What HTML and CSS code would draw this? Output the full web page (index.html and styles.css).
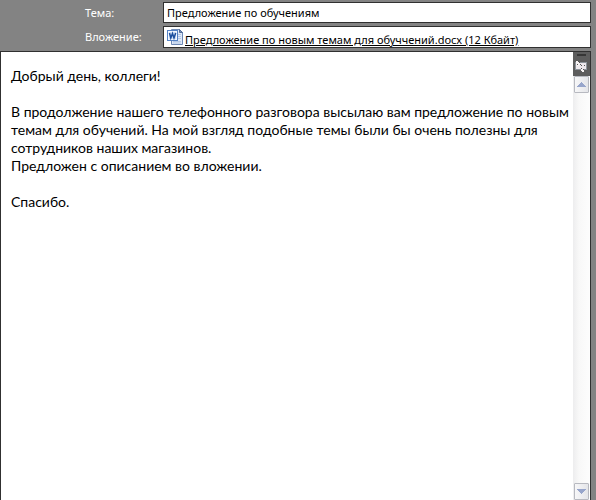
FILE: index.html
```
<!DOCTYPE html>
<html lang="ru">
<head>
<meta charset="utf-8">
<meta name="viewport" content="width=device-width, initial-scale=1">
<title>Сообщение</title>
<link rel="stylesheet" href="styles.css">
</head>
<body>
<form class="message">
  <div class="fields">
    <label class="label" for="subject">Тема:</label>
    <input class="box" id="subject" type="text" value="Предложение по обучениям">
    <span class="label" id="attachment-label">Вложение:</span>
    <div class="box attachment" role="group" aria-labelledby="attachment-label">
      <svg class="doc-icon" width="16" height="16" viewBox="0 0 16 16" aria-hidden="true">
        <path d="M4.500.500h8l3 3v12h-11z" fill="#dfe9f8" stroke="#6d88b5"/>
        <path d="M12.500.500v3h3z" fill="#7790b8" stroke="#526d9b"/>
        <path d="M11 5.500h3M11 7.500h3M11 9.500h3M6 12.500h8M6 14h8" stroke="#b4c8e6"/>
        <rect x=".5" y="1.500" width="10" height="10" fill="#f4f8ff" stroke="#5482c5"/>
        <path d="M2 3h7v7H2z" fill="#d3e2f6"/>
        <path d="M2.500 4l1.300 5L5.500 4.500 7 9l1.700-5" fill="none" stroke="#1c4f9e" stroke-width="1.500"/>
      </svg>
      <a class="file" href="#">Предложение по новым темам для обуччений.docx (12 Кбайт)</a>
    </div>
  </div>
  <div class="editor">
    <textarea class="text" aria-label="Текст сообщения" spellcheck="false">
Добрый день, коллеги!

В продолжение нашего телефонного разговора высылаю вам предложение по новым темам для обучений. На мой взгляд подобные темы были бы очень полезны для сотрудников наших магазинов.
Предложен с описанием во вложении.

Спасибо.</textarea>
    <div class="scroll">
      <button class="ruler" type="button" aria-label="Линейка">
        <svg width="17" height="24" viewBox="0 0 17 24" shape-rendering="crispEdges" aria-hidden="true">
          <path d="M4 2h9v2H4z" fill="#363636"/>
          <path d="M2 10h12v8H2z" fill="#8d949b"/>
          <path d="M3 11h10v6H3z" fill="#eee9ed"/>
          <path d="M3 9h2v1h1v1h1v2H6v1H4v-1H3zM8 16h1v1h2v3H9v-1H8z" fill="#f7f3f4"/>
          <path d="M5 9h1v1H5zM6 10h1v1H6zM4 12h1v1H4zM7 12h1v1H7zM8 13h1v1H8zM11 13h1v1h-1zM8 16h1v1H8zM10 17h1v1h-1z" fill="#555"/>
        </svg>
      </button>
      <button class="arrow" type="button" aria-label="Вверх">
        <svg width="9" height="5" viewBox="0 0 9 5" shape-rendering="crispEdges" aria-hidden="true"><path d="M4 0h1v1h1v1h1v1h1v1h1v1H0V4h1V3h1V2h1V1h1z" fill="#97a5cb"/></svg>
      </button>
      <div class="track"></div>
      <button class="arrow" type="button" aria-label="Вниз">
        <svg width="9" height="5" viewBox="0 0 9 5" shape-rendering="crispEdges" aria-hidden="true"><path d="M0 0h9v1H8v1H7v1H6v1H5v1H4V4H3V3H2V2H1V1H0z" fill="#97a5cb"/></svg>
      </button>
    </div>
  </div>
</form>
</body>
</html>
```
FILE: styles.css
```
* {
  box-sizing: border-box;
}

body {
  margin: 0;
  background: #838383;
  color: #000;
  font-family: "Noto Sans", "Open Sans", sans-serif;
  font-size: 11px;
}

.message {
  display: flex;
  flex-direction: column;
  height: 100vh;
  padding: 2px 5px 0 0;
}

.fields {
  display: grid;
  grid-template-columns: 78px 1fr;
  align-items: center;
  gap: 3px 0;
  padding-left: 85px;
}

.label {
  color: #fff;
  line-height: 20px;
}

.box {
  width: 100%;
  height: 21px;
  padding: 0 3px;
  border: 1px solid #303030;
  border-radius: 0;
  background: #fff;
  color: #000;
  font: inherit;
  outline: 0;
}

.attachment {
  display: flex;
  align-items: center;
  gap: 2px;
  height: 22px;
}

.doc-icon {
  flex: none;
}

.file {
  padding-top: 5px;
  color: #000;
  line-height: 15px;
  white-space: nowrap;
}

.editor {
  display: flex;
  flex: 1;
  min-height: 0;
  margin-top: 3px;
  border: 1px solid #303030;
  border-bottom: 0;
  background: #fff;
}

.text {
  flex: 1;
  min-width: 0;
  padding: 15px 4px 0 10px;
  border: 0;
  background: #fff;
  color: #000;
  font: 14px/18px Lato, "Open Sans", sans-serif;
  outline: 0;
  overflow: hidden;
  resize: none;
}

.scroll {
  display: flex;
  flex-direction: column;
  align-items: center;
  width: 17px;
  background: linear-gradient(90deg, #ededee, #f8f8f8 35%, #fdfdfd);
}

.ruler {
  width: 17px;
  height: 24px;
  padding: 0;
  border: 0;
  background: #5d5d5d;
}

.ruler svg {
  display: block;
}

.arrow {
  display: flex;
  align-items: center;
  justify-content: center;
  width: 15px;
  height: 17px;
  padding: 0;
  border: 1px solid #b7b9c0;
  border-radius: 1px;
  background: linear-gradient(90deg, #f7f7f8, #e4e5e9);
}

.track {
  flex: 1;
}
```
